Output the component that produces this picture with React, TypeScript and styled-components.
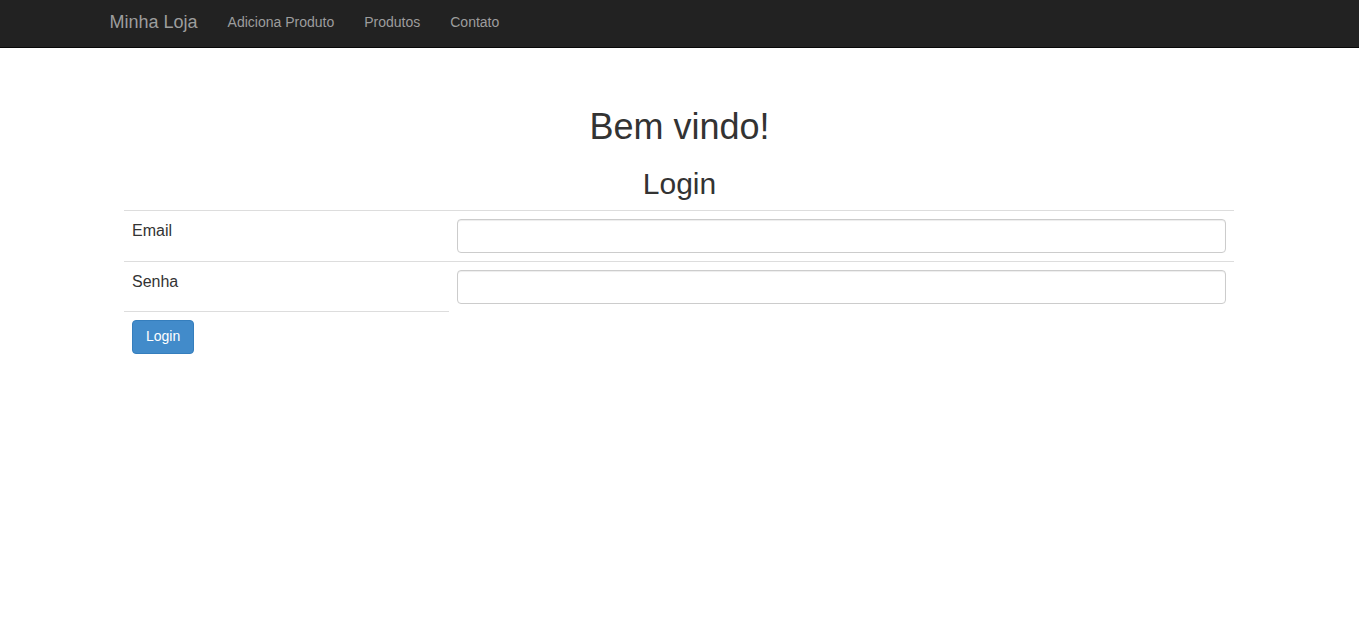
import React from "react";
import styled, { createGlobalStyle } from "styled-components";

const Global = createGlobalStyle`
  html, body { margin: 0; padding: 0; background: #fff; }
  body {
    font-family: "Liberation Sans", Arial, Helvetica, sans-serif;
    font-size: 14px;
    line-height: 1.42857;
    color: #333;
  }
  * { box-sizing: border-box; }
`;

const Navbar = styled.nav`
  background: #222;
  border-bottom: 1px solid #080808;
  height: 48px;
`;

const NavContainer = styled.div`
  width: 1170px;
  margin: 0 auto;
  padding: 0 15px 3px;
  display: flex;
  align-items: center;
  height: 47px;
`;

const Brand = styled.a`
  font-size: 18px;
  line-height: 20px;
  color: #9d9d9d;
  text-decoration: none;
  padding: 0 15px;
  margin-left: -15px;
`;

const NavLink = styled.a`
  font-size: 14px;
  line-height: 20px;
  color: #9d9d9d;
  text-decoration: none;
  padding: 0 15px;
`;

const Main = styled.main`
  width: 1111px;
  margin: 0 auto;
  padding-top: 59px;
`;

const Title = styled.h1`
  font-size: 36px;
  font-weight: 500;
  line-height: 1.1;
  text-align: center;
  margin: 0 0 10px;
`;

const Subtitle = styled.h2`
  font-size: 30px;
  font-weight: 500;
  line-height: 1.1;
  text-align: center;
  margin: 20px 0 10px;
`;

const Table = styled.table`
  width: 1110px;
  border-collapse: collapse;
  border-spacing: 0;
`;

const Cell = styled.td<{ $label?: boolean }>`
  padding: 8px;
  border-top: 1px solid #ddd;
  vertical-align: top;
  line-height: 1.42857;
  width: ${(p) => (p.$label ? "325px" : "auto")};
  font-size: ${(p) => (p.$label ? "16px" : "14px")};
`;

const LabelText = styled.span`
  display: block;
  padding-top: 1px;
`;

const Input = styled.input`
  display: block;
  width: 100%;
  height: 34px;
  padding: 6px 12px;
  font-size: 14px;
  color: #555;
  background: #fff;
  border: 1px solid #ccc;
  border-radius: 4px;
  box-shadow: inset 0 1px 1px rgba(0, 0, 0, 0.075);
  font-family: inherit;
`;

const Button = styled.button`
  display: inline-block;
  padding: 6px 13px;
  font-size: 14px;
  line-height: 1.42857;
  font-family: inherit;
  color: #fff;
  background: #428bca;
  border: 1px solid #357ebd;
  border-radius: 4px;
  cursor: pointer;
`;

export default function App() {
  return (
    <>
      <Global />
      <Navbar>
        <NavContainer>
          <Brand href="#">Minha Loja</Brand>
          <NavLink href="#">Adiciona Produto</NavLink>
          <NavLink href="#">Produtos</NavLink>
          <NavLink href="#">Contato</NavLink>
        </NavContainer>
      </Navbar>
      <Main>
        <Title>Bem vindo!</Title>
        <Subtitle>Login</Subtitle>
        <Table>
          <tbody>
            <tr>
              <Cell $label>
                <LabelText>Email</LabelText>
              </Cell>
              <Cell>
                <Input type="text" />
              </Cell>
            </tr>
            <tr>
              <Cell $label>
                <LabelText>Senha</LabelText>
              </Cell>
              <Cell>
                <Input type="password" />
              </Cell>
            </tr>
            <tr>
              <Cell $label>
                <Button>Login</Button>
              </Cell>
            </tr>
          </tbody>
        </Table>
      </Main>
    </>
  );
}
